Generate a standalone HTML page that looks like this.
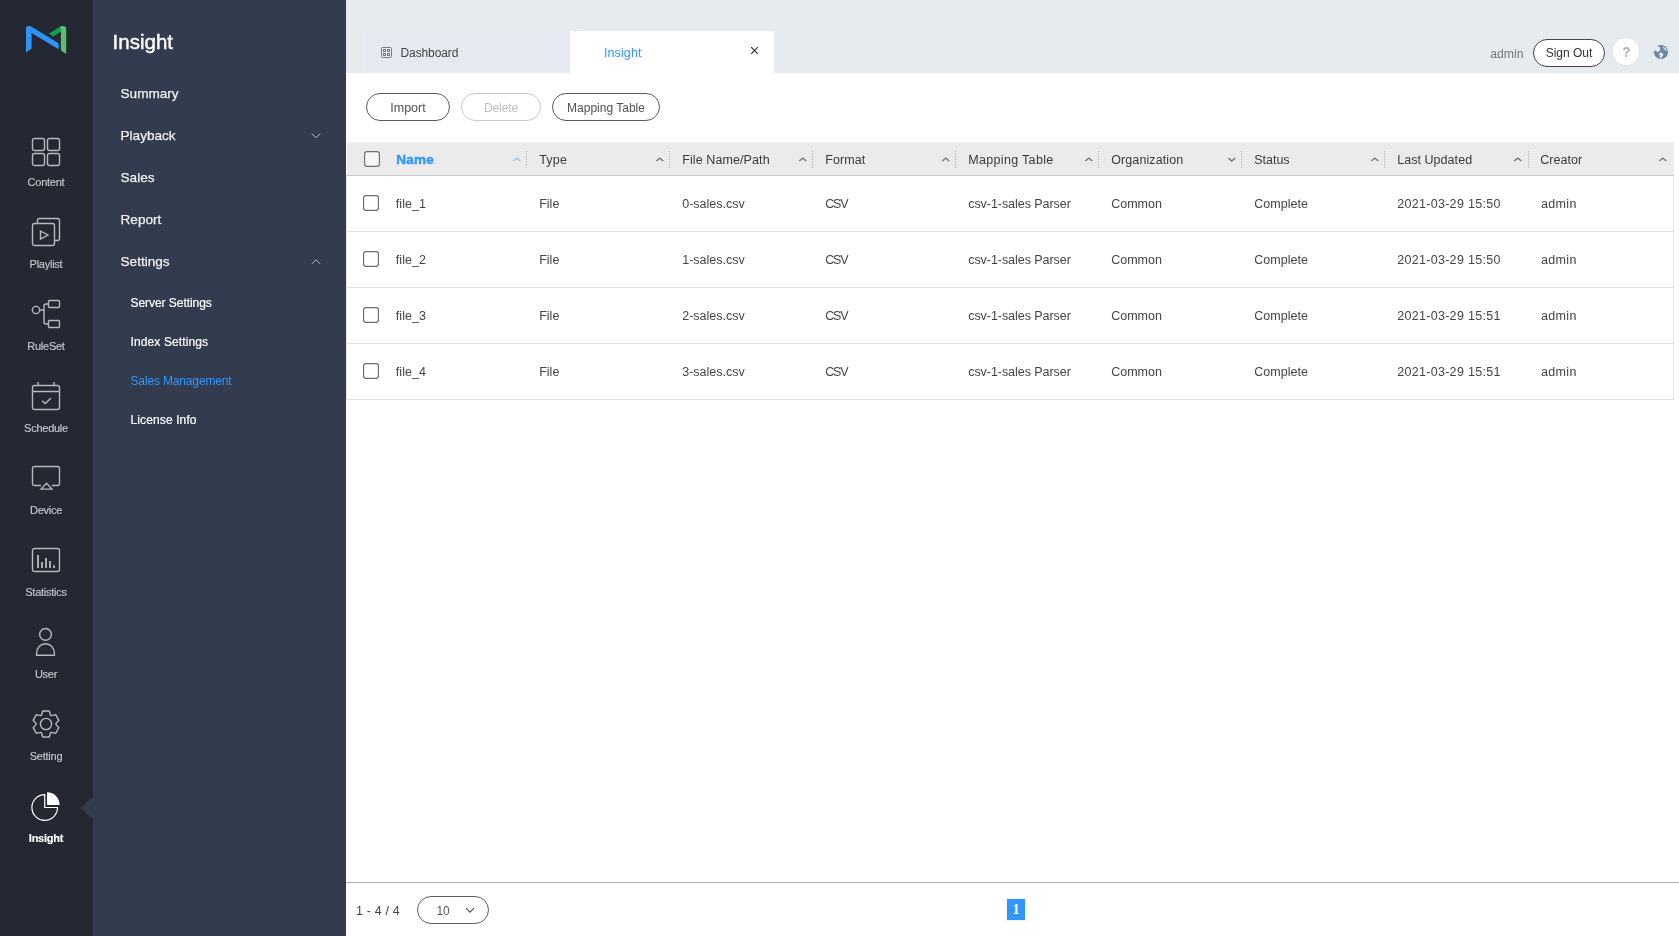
<!DOCTYPE html>
<html><head><meta charset="utf-8"><title>Insight</title>
<style>
*{box-sizing:border-box;margin:0;padding:0}
html,body{width:1679px;height:936px;overflow:hidden;background:#fff;font-family:"Liberation Sans",sans-serif;}
body{position:relative}
div,span,svg{position:absolute}
#layer{left:0;top:0;width:1679px;height:936px;will-change:transform}
.t{white-space:nowrap;transform:translateY(-50%);line-height:1}
#nav{left:0;top:0;width:93px;height:936px;background:#242833}
#sub{left:93px;top:0;width:253px;height:936px;background:#333b4e}
#top{left:346px;top:0;width:1333px;height:73px;background:#e6ebef}
.nl{left:0;width:92px;text-align:center;color:#c6c8cc;font-size:11px;letter-spacing:-0.25px;-webkit-text-stroke:.15px currentColor}
.m1{left:120.5px;color:#f0f1f3;font-size:13.6px;-webkit-text-stroke:.25px #f0f1f3}
.m2{left:130.5px;color:#fff;font-size:12px;-webkit-text-stroke:.2px currentColor}
.btn{top:93px;height:28px;border:1px solid #5a5a5a;border-radius:14px;background:#fff}
.btn .t{left:0;right:0;top:14px;text-align:center;font-size:12.5px;color:#525252}
.th{font-size:12.5px;color:#3a3a3a}
.td{font-size:12.5px;color:#444}
.cb{width:16px;height:16px;border:1px solid #666;border-radius:2.5px;background:#fff}
.sep{width:0;border-left:1px dotted #b5b5b5;top:151px;height:17px}
.rl{left:346px;width:1328px;height:1px;background:#e1e1e1}
</style></head><body>
<div id="layer">
<div id="nav"></div><div id="sub"></div><div id="top"></div>
<svg style="left:20px;top:20px" width="54" height="40" viewBox="20 20 54 40">
<path d="M26 28.5 Q26 26 28.5 26 Q30.2 26 31.5 26.8 L58.6 43.3 L58.6 49.3 L31.6 32.9 L31.6 48.6 L26 52.4 Z" fill="#2e93fa"/>
<path d="M48.8 33.6 L60.5 26.6 L61.2 31.4 L53.3 36.4 Z" fill="#0e9f4f"/>
<path d="M60.2 26.2 Q61.6 25.8 63.2 26 Q66.2 26.3 66.2 29 L66.2 54 L60.9 50.4 L60.9 30.5 Z" fill="#5bbf6a"/>
</svg>
<svg style="left:31px;top:137px" width="30" height="30" viewBox="0 0 30 30" fill="none" stroke="#b6b8bc" stroke-width="1.4" ><rect x="1.5" y="1.5" width="12" height="12" rx="2"/><rect x="16.5" y="1.5" width="12" height="12" rx="2"/>
<rect x="1.5" y="16.5" width="12" height="12" rx="2"/><rect x="16.5" y="16.5" width="12" height="12" rx="2"/></svg>
<svg style="left:31px;top:217px" width="30" height="30" viewBox="0 0 30 30" fill="none" stroke="#b6b8bc" stroke-width="1.4" ><path d="M6.5 6.5 V3.5 Q6.5 1.5 8.5 1.5 H26.5 Q28.5 1.5 28.5 3.5 V21.5 Q28.5 23.5 26.5 23.5 H23.5"/>
<rect x="1.5" y="6.5" width="22" height="22" rx="2"/><path d="M9.5 14 L17 18 L9.5 22 Z"/></svg>
<svg style="left:31px;top:299px" width="30" height="30" viewBox="0 0 30 30" fill="none" stroke="#b6b8bc" stroke-width="1.4" ><circle cx="5" cy="11" r="3.65"/><rect x="17.5" y="1.5" width="11" height="7" rx="1"/><rect x="17.5" y="21.5" width="11" height="7" rx="1"/>
<path d="M8.6 11 H13 M17.5 5 H15 Q13 5 13 7 V23 Q13 25 15 25 H17.5"/></svg>
<svg style="left:31px;top:381px" width="30" height="30" viewBox="0 0 30 30" fill="none" stroke="#b6b8bc" stroke-width="1.4" ><rect x="1.5" y="4.5" width="27" height="24" rx="2"/><path d="M1.5 10.5 H28.5 M7 1 V4.5 M23 1 V4.5 M11 19.7 L14.3 22.6 L20 17"/></svg>
<svg style="left:31px;top:465px" width="30" height="30" viewBox="0 0 30 30" fill="none" stroke="#b6b8bc" stroke-width="1.4" ><path d="M10 20.5 H3.5 Q1.5 20.5 1.5 18.5 V3.5 Q1.5 1.5 3.5 1.5 H26.5 Q28.5 1.5 28.5 3.5 V18.5 Q28.5 20.5 26.5 20.5 H20.9"/><path d="M15.5 18.2 L20.9 24.1 H10.1 Z"/></svg>
<svg style="left:31px;top:547px" width="30" height="30" viewBox="0 0 30 30" fill="none" stroke="#b6b8bc" stroke-width="1.4" ><rect x="1.5" y="1.5" width="27" height="23" rx="2"/><path d="M7 8 V21 M11 15 V21 M15 10.9 V21 M19 14 V21 M23 18.2 V21" stroke-width="1.8"/></svg>
<svg style="left:31px;top:625px" width="30" height="32" viewBox="0 0 30 32" fill="none" stroke="#b6b8bc" stroke-width="1.4" ><circle cx="14.5" cy="9.4" r="5.85"/><path d="M5.6 30.3 V28.2 A8.9 9.4 0 0 1 23.4 28.2 V30.3 Z"/></svg>
<svg style="left:31px;top:709px" width="30" height="30" viewBox="0 0 30 30" fill="none" stroke="#b6b8bc" stroke-width="1.4" ><path d="M10.54 6.05 L11.76 2.00 L18.24 2.00 L19.46 6.05 L20.52 6.66 L24.64 5.69 L27.88 11.31 L24.98 14.39 L24.98 15.61 L27.88 18.69 L24.64 24.31 L20.52 23.34 L19.46 23.95 L18.24 28.00 L11.76 28.00 L10.54 23.95 L9.48 23.34 L5.36 24.31 L2.12 18.69 L5.02 15.61 L5.02 14.39 L2.12 11.31 L5.36 5.69 L9.48 6.66 Z" stroke-linejoin="round"/><circle cx="15" cy="15" r="5.6"/></svg>
<svg style="left:28px;top:788px" width="36" height="36" viewBox="28 788 36 36" fill="none" stroke="#fff" stroke-width="1.2">
<path d="M44.7 794.7 V807.5 H57.5 A12.8 12.8 0 1 1 44.7 794.7 Z"/><path d="M47 792.2 A12.6 12.6 0 0 1 59.6 804.9 H47 Z" fill="#fff" stroke="none"/></svg>
<svg style="left:80px;top:794px" width="14" height="28" viewBox="80 794 14 28"><path d="M93.5 795.5 L81 808 L93.5 820.5 Z" fill="#333b4e"/></svg>
<div class="t nl" style="top:182px">Content</div>
<div class="t nl" style="top:264px">Playlist</div>
<div class="t nl" style="top:346px">RuleSet</div>
<div class="t nl" style="top:428px">Schedule</div>
<div class="t nl" style="top:510px">Device</div>
<div class="t nl" style="top:592px">Statistics</div>
<div class="t nl" style="top:674px">User</div>
<div class="t nl" style="top:756px">Setting</div>
<div class="t nl" style="top:838px;color:#fff;font-weight:bold">Insight</div>
<div class="t" style="left:112.6px;top:42px;color:#fff;font-size:20.5px;-webkit-text-stroke:.4px #fff">Insight</div>
<div class="t m1" style="top:94px">Summary</div>
<div class="t m1" style="top:136px">Playback</div>
<div class="t m1" style="top:178px">Sales</div>
<div class="t m1" style="top:220px">Report</div>
<div class="t m1" style="top:262px">Settings</div>
<div class="t m2" style="top:302.7px;color:#fff;letter-spacing:-0.05px">Server Settings</div>
<div class="t m2" style="top:341.7px;color:#fff;letter-spacing:0.12px">Index Settings</div>
<div class="t m2" style="top:380.7px;color:#3196ff;letter-spacing:-0.15px;-webkit-text-stroke:0">Sales Management</div>
<div class="t m2" style="top:419.7px;color:#fff;letter-spacing:0.12px">License Info</div>
<svg style="left:311px;top:132px" width="10" height="8" viewBox="0 0 10 8" fill="none" stroke="#c3c6cc" stroke-width="1"><path d="M1 1.8 L5 5.8 L9 1.8"/></svg>
<svg style="left:311px;top:258px" width="10" height="8" viewBox="0 0 10 8" fill="none" stroke="#c3c6cc" stroke-width="1"><path d="M1 5.8 L5 1.8 L9 5.8"/></svg>
<div style="left:366px;top:31px;width:204px;height:42px;background:#e6e9f1"></div>
<div style="left:570px;top:31px;width:204px;height:42px;background:#fff"></div>
<svg style="left:381px;top:47px" width="11" height="11" viewBox="0 0 11 11" fill="none" stroke="#76787d" stroke-width="1"><rect x=".5" y=".5" width="10" height="10" rx="0.9" fill="#eceff6"/><rect x="2.5" y="2.5" width="2" height="2"/><rect x="6.5" y="2.5" width="2" height="2"/><rect x="2.5" y="6.5" width="2" height="2"/><rect x="6.5" y="6.5" width="2" height="2"/></svg>
<div class="t" style="left:400.5px;top:52.8px;font-size:12px;color:#444;letter-spacing:-0.1px">Dashboard</div>
<div class="t" style="left:604px;top:52.5px;font-size:12.5px;color:#3196ff;letter-spacing:0.1px">Insight</div>
<svg style="left:750px;top:46px" width="9" height="9" viewBox="0 0 9 9" stroke="#333" stroke-width="1.2"><path d="M1.2 1.2 L7.8 7.8 M7.8 1.2 L1.2 7.8"/></svg>
<div class="t" style="left:1490.3px;top:53.8px;font-size:12.2px;color:#777">admin</div>
<div style="left:1533px;top:39px;width:72px;height:28px;border:1px solid #444;border-radius:14px;background:#fff"><div class="t" style="left:0;right:0;top:12.6px;text-align:center;font-size:12px;color:#333">Sign Out</div></div>
<div style="left:1612.6px;top:38.4px;width:26.8px;height:26.8px;border-radius:14px;background:#fff;box-shadow:0 0 0 .6px #dcdfe9"><div class="t" style="left:0;right:0;top:13.8px;text-align:center;font-size:15.2px;font-weight:bold;color:#b0b0b0;transform:translateY(-50%) scaleX(.86)">?</div></div>
<svg style="left:1653px;top:43.9px" width="16" height="16" viewBox="0 0 16 16"><circle cx="8" cy="8" r="7.05" fill="#6d87a5"/>
<path d="M0 6 L1 5.95 L3.7 7.8 L6.2 7.4 L7.2 5.5 L7 3 L4.7 2.6 L4.1 2 L2 0 L0 2 Z" fill="#e7ebf0"/>
<path d="M5.9 8.9 L8.5 8.6 L10.6 10.5 L9.3 12.6 L7.6 14.8 L7 13.4 L6.6 11 Z" fill="#e7ebf0"/>
<path d="M10.2 3.4 Q12.9 4.3 13.3 6.9" fill="none" stroke="#e7ebf0" stroke-width="1.2"/></svg>
<div class="btn" style="left:366px;width:84px"><div class="t">Import</div></div>
<div class="btn" style="left:461px;width:80px;border-color:#c8c8c8"><div class="t" style="color:#bdbdbd;font-size:12px;letter-spacing:-0.1px">Delete</div></div>
<div class="btn" style="left:552px;width:108px"><div class="t" style="font-size:12px">Mapping Table</div></div>
<div style="left:347px;top:142px;width:1327px;height:33px;background:#ebebeb;border-top:1px solid #f1f1f1"></div>
<div style="left:346px;top:176px;width:1px;height:224px;background:#e6e6e6"></div>
<div style="left:1673px;top:176px;width:1px;height:224px;background:#e6e6e6"></div>
<div style="left:346px;top:175px;width:1328px;height:1px;background:#c9c9c9"></div>
<svg style="left:364px;top:151px" width="16" height="16" viewBox="0 0 16 16"><rect x=".6" y=".6" width="14.8" height="14.8" rx="2.3" fill="#f7f7f7" stroke="#6e6e6e" stroke-width="1.15"/></svg>
<div class="t th" style="left:396.2px;top:159.6px;color:#3196ff;font-weight:bold;font-size:13.5px;letter-spacing:0.3px;-webkit-text-stroke:.45px #3196ff">Name</div>
<svg style="left:512.3px;top:155.6px" width="9" height="7" viewBox="0 0 9 7" fill="none" stroke="#8cc4f5" stroke-width="1.35"><path d="M1.4 5.1 L4.8 2.1 L8.2 5.1"/></svg>
<div class="sep" style="left:526px"></div>
<div class="t th" style="left:539.2px;top:159.8px;letter-spacing:0.2px">Type</div>
<svg style="left:655.3px;top:155.6px" width="9" height="7" viewBox="0 0 9 7" fill="none" stroke="#707070" stroke-width="1.35"><path d="M1.4 5.1 L4.8 2.1 L8.2 5.1"/></svg>
<div class="sep" style="left:669px"></div>
<div class="t th" style="left:682.2px;top:159.8px;letter-spacing:0.1px">File Name/Path</div>
<svg style="left:798.3px;top:155.6px" width="9" height="7" viewBox="0 0 9 7" fill="none" stroke="#707070" stroke-width="1.35"><path d="M1.4 5.1 L4.8 2.1 L8.2 5.1"/></svg>
<div class="sep" style="left:812px"></div>
<div class="t th" style="left:825.2px;top:159.8px;letter-spacing:0.1px">Format</div>
<svg style="left:941.3px;top:155.6px" width="9" height="7" viewBox="0 0 9 7" fill="none" stroke="#707070" stroke-width="1.35"><path d="M1.4 5.1 L4.8 2.1 L8.2 5.1"/></svg>
<div class="sep" style="left:955px"></div>
<div class="t th" style="left:968.2px;top:159.8px;letter-spacing:0.33px">Mapping Table</div>
<svg style="left:1084.3px;top:155.6px" width="9" height="7" viewBox="0 0 9 7" fill="none" stroke="#707070" stroke-width="1.35"><path d="M1.4 5.1 L4.8 2.1 L8.2 5.1"/></svg>
<div class="sep" style="left:1098px"></div>
<div class="t th" style="left:1111.2px;top:159.8px;letter-spacing:0.1px">Organization</div>
<svg style="left:1227.3px;top:155.6px" width="9" height="7" viewBox="0 0 9 7" fill="none" stroke="#707070" stroke-width="1.35"><path d="M1.4 2.1 L4.8 5.1 L8.2 2.1"/></svg>
<div class="sep" style="left:1241px"></div>
<div class="t th" style="left:1254.2px;top:159.8px;letter-spacing:0px">Status</div>
<svg style="left:1370.3px;top:155.6px" width="9" height="7" viewBox="0 0 9 7" fill="none" stroke="#707070" stroke-width="1.35"><path d="M1.4 5.1 L4.8 2.1 L8.2 5.1"/></svg>
<div class="sep" style="left:1384px"></div>
<div class="t th" style="left:1397.2px;top:159.8px;letter-spacing:0.05px">Last Updated</div>
<svg style="left:1513.3px;top:155.6px" width="9" height="7" viewBox="0 0 9 7" fill="none" stroke="#707070" stroke-width="1.35"><path d="M1.4 5.1 L4.8 2.1 L8.2 5.1"/></svg>
<div class="sep" style="left:1528px"></div>
<div class="t th" style="left:1540.2px;top:159.8px;letter-spacing:0.05px">Creator</div>
<svg style="left:1658.2px;top:155.6px" width="9" height="7" viewBox="0 0 9 7" fill="none" stroke="#707070" stroke-width="1.35"><path d="M1.4 5.1 L4.8 2.1 L8.2 5.1"/></svg>
<svg style="left:363px;top:195px" width="16" height="16" viewBox="0 0 16 16"><rect x=".6" y=".6" width="14.8" height="14.8" rx="2.3" fill="#fff" stroke="#6e6e6e" stroke-width="1.15"/></svg>
<div class="t td" style="left:395.8px;top:203.8px;letter-spacing:0.05px">file_1</div>
<div class="t td" style="left:539.2px;top:203.8px;letter-spacing:0px">File</div>
<div class="t td" style="left:682.2px;top:203.8px;letter-spacing:0px">0-sales.csv</div>
<div class="t td" style="left:825.2px;top:203.8px;letter-spacing:-1.2px">CSV</div>
<div class="t td" style="left:968.2px;top:203.8px;letter-spacing:-0.05px">csv-1-sales Parser</div>
<div class="t td" style="left:1111.2px;top:203.8px;letter-spacing:0px">Common</div>
<div class="t td" style="left:1254.2px;top:203.8px;letter-spacing:0.05px">Complete</div>
<div class="t td" style="left:1397.2px;top:203.8px;letter-spacing:0.3px">2021-03-29 15:50</div>
<div class="t td" style="left:1541.1px;top:203.8px;letter-spacing:0.3px">admin</div>
<div class="rl" style="top:231px"></div>
<svg style="left:363px;top:251px" width="16" height="16" viewBox="0 0 16 16"><rect x=".6" y=".6" width="14.8" height="14.8" rx="2.3" fill="#fff" stroke="#6e6e6e" stroke-width="1.15"/></svg>
<div class="t td" style="left:395.8px;top:259.8px;letter-spacing:0.05px">file_2</div>
<div class="t td" style="left:539.2px;top:259.8px;letter-spacing:0px">File</div>
<div class="t td" style="left:682.2px;top:259.8px;letter-spacing:0px">1-sales.csv</div>
<div class="t td" style="left:825.2px;top:259.8px;letter-spacing:-1.2px">CSV</div>
<div class="t td" style="left:968.2px;top:259.8px;letter-spacing:-0.05px">csv-1-sales Parser</div>
<div class="t td" style="left:1111.2px;top:259.8px;letter-spacing:0px">Common</div>
<div class="t td" style="left:1254.2px;top:259.8px;letter-spacing:0.05px">Complete</div>
<div class="t td" style="left:1397.2px;top:259.8px;letter-spacing:0.3px">2021-03-29 15:50</div>
<div class="t td" style="left:1541.1px;top:259.8px;letter-spacing:0.3px">admin</div>
<div class="rl" style="top:287px"></div>
<svg style="left:363px;top:307px" width="16" height="16" viewBox="0 0 16 16"><rect x=".6" y=".6" width="14.8" height="14.8" rx="2.3" fill="#fff" stroke="#6e6e6e" stroke-width="1.15"/></svg>
<div class="t td" style="left:395.8px;top:315.8px;letter-spacing:0.05px">file_3</div>
<div class="t td" style="left:539.2px;top:315.8px;letter-spacing:0px">File</div>
<div class="t td" style="left:682.2px;top:315.8px;letter-spacing:0px">2-sales.csv</div>
<div class="t td" style="left:825.2px;top:315.8px;letter-spacing:-1.2px">CSV</div>
<div class="t td" style="left:968.2px;top:315.8px;letter-spacing:-0.05px">csv-1-sales Parser</div>
<div class="t td" style="left:1111.2px;top:315.8px;letter-spacing:0px">Common</div>
<div class="t td" style="left:1254.2px;top:315.8px;letter-spacing:0.05px">Complete</div>
<div class="t td" style="left:1397.2px;top:315.8px;letter-spacing:0.3px">2021-03-29 15:51</div>
<div class="t td" style="left:1541.1px;top:315.8px;letter-spacing:0.3px">admin</div>
<div class="rl" style="top:343px"></div>
<svg style="left:363px;top:363px" width="16" height="16" viewBox="0 0 16 16"><rect x=".6" y=".6" width="14.8" height="14.8" rx="2.3" fill="#fff" stroke="#6e6e6e" stroke-width="1.15"/></svg>
<div class="t td" style="left:395.8px;top:371.8px;letter-spacing:0.05px">file_4</div>
<div class="t td" style="left:539.2px;top:371.8px;letter-spacing:0px">File</div>
<div class="t td" style="left:682.2px;top:371.8px;letter-spacing:0px">3-sales.csv</div>
<div class="t td" style="left:825.2px;top:371.8px;letter-spacing:-1.2px">CSV</div>
<div class="t td" style="left:968.2px;top:371.8px;letter-spacing:-0.05px">csv-1-sales Parser</div>
<div class="t td" style="left:1111.2px;top:371.8px;letter-spacing:0px">Common</div>
<div class="t td" style="left:1254.2px;top:371.8px;letter-spacing:0.05px">Complete</div>
<div class="t td" style="left:1397.2px;top:371.8px;letter-spacing:0.3px">2021-03-29 15:51</div>
<div class="t td" style="left:1541.1px;top:371.8px;letter-spacing:0.3px">admin</div>
<div class="rl" style="top:399px"></div>
<div style="left:346px;top:882px;width:1333px;height:1px;background:#b0b0b0"></div>
<div class="t" style="left:356px;top:911px;font-size:12.5px;color:#444;letter-spacing:0.18px">1 - 4 / 4</div>
<div style="left:417px;top:896px;width:72px;height:28px;border:1px solid #5e5e5e;border-radius:14px;background:#fff"><div class="t" style="left:18.5px;top:14px;font-size:12px;color:#5a5a5a;letter-spacing:-0.2px">10</div><svg style="left:47px;top:10.2px" width="10" height="7" viewBox="0 0 10 7" fill="none" stroke="#4a4a4a" stroke-width="1.05"><path d="M1 1.2 L5 5.2 L9 1.2"/></svg></div>
<div style="left:1006.9px;top:898.8px;width:18.4px;height:21.3px;background:#3396ff;box-shadow:0 0 0 .6px #efe8e0"><div class="t" style="left:0;right:0;top:11.5px;text-align:center;font-size:13.8px;color:#fff;font-weight:bold;font-family:'Liberation Serif',serif">1</div></div>
</div>
</body></html>
